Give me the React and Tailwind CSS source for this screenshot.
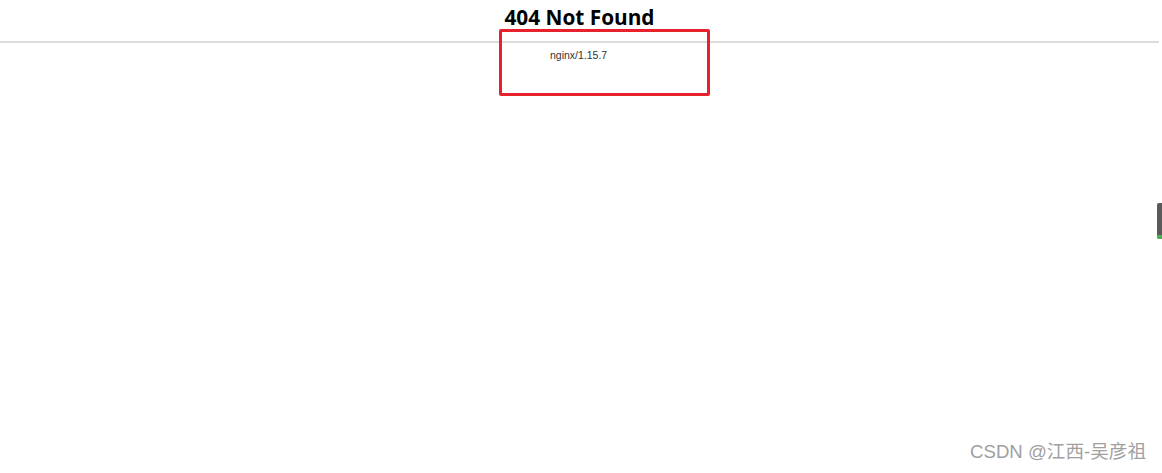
import React from "react";

// Screenshot of an nginx 404 page, with a red annotation box and a blog watermark
const App = () => {
  return (
    <div className="relative w-[1162px] h-[473px] bg-white overflow-hidden">
      <div className="flex flex-col w-[1159px]">
        <h1 className="pt-[4px] h-[41px] text-center text-[20.8px] font-bold text-black leading-[26px] font-['Open_Sans','Liberation_Sans',sans-serif]">
          404 Not Found
        </h1>
        <div className="h-[2px] bg-[#dcdcdc]" />
        <p className="mt-[5px] pl-[550px] text-[10.5px] leading-[14px] text-[#333] font-['Liberation_Sans',Arial,sans-serif]">
          nginx/1.15.7
        </p>
      </div>

      {/* red annotation box */}
      <div className="absolute left-[499px] top-[29px] w-[211px] h-[67px] border-[3px] border-[#e8222c] rounded-[2px]" />

      {/* scrollbar thumb */}
      <div className="absolute left-[1157px] top-[203px] w-[5px] h-[36px] bg-[#5a5a5a] rounded-l-[2px] flex flex-col justify-end">
        <div className="h-[4px] bg-[#4caf50] rounded-bl-[2px]" />
      </div>

      {/* watermark */}
      <div className="absolute right-[16px] top-[440px] text-[18.6px] leading-[24px] text-[#a0a0a0] font-['Liberation_Sans','Noto_Sans_CJK_SC',sans-serif]">
        CSDN @江西-吴彦祖
      </div>
    </div>
  );
};

export default App;
